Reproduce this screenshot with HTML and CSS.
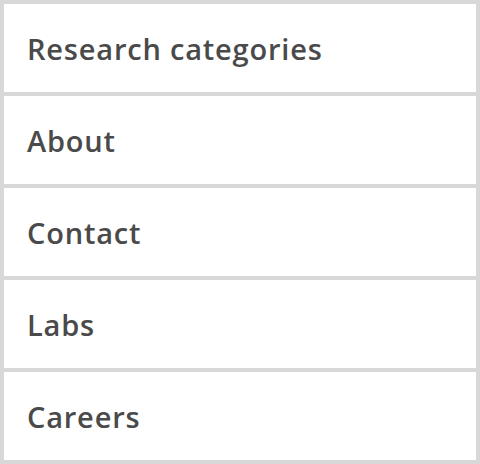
FILE: index.html
```html
<!DOCTYPE html>
<html>
<head>
<meta charset="utf-8">
<link rel="stylesheet" href="styles.css">
</head>
<body>
<nav class="menu">
  <a class="menu-item" href="#">Research categories</a>
  <a class="menu-item" href="#">About</a>
  <a class="menu-item" href="#">Contact</a>
  <a class="menu-item" href="#">Labs</a>
  <a class="menu-item" href="#">Careers</a>
</nav>
</body>
</html>
```
FILE: styles.css
```css
html, body {
  margin: 0;
  padding: 0;
  background: #d8d8d8;
}
.menu {
  width: 480px;
  height: 464px;
  box-sizing: border-box;
  padding: 4px;
  display: flex;
  flex-direction: column;
  gap: 4px;
}
.menu-item {
  flex: 1;
  background: #ffffff;
  display: flex;
  align-items: center;
  padding-left: 23px;
  font-family: "Open Sans", sans-serif;
  font-weight: 600;
  font-size: 29px;
  letter-spacing: 0.8px;
  color: #4a4a4a;
  text-decoration: none;
}
```
